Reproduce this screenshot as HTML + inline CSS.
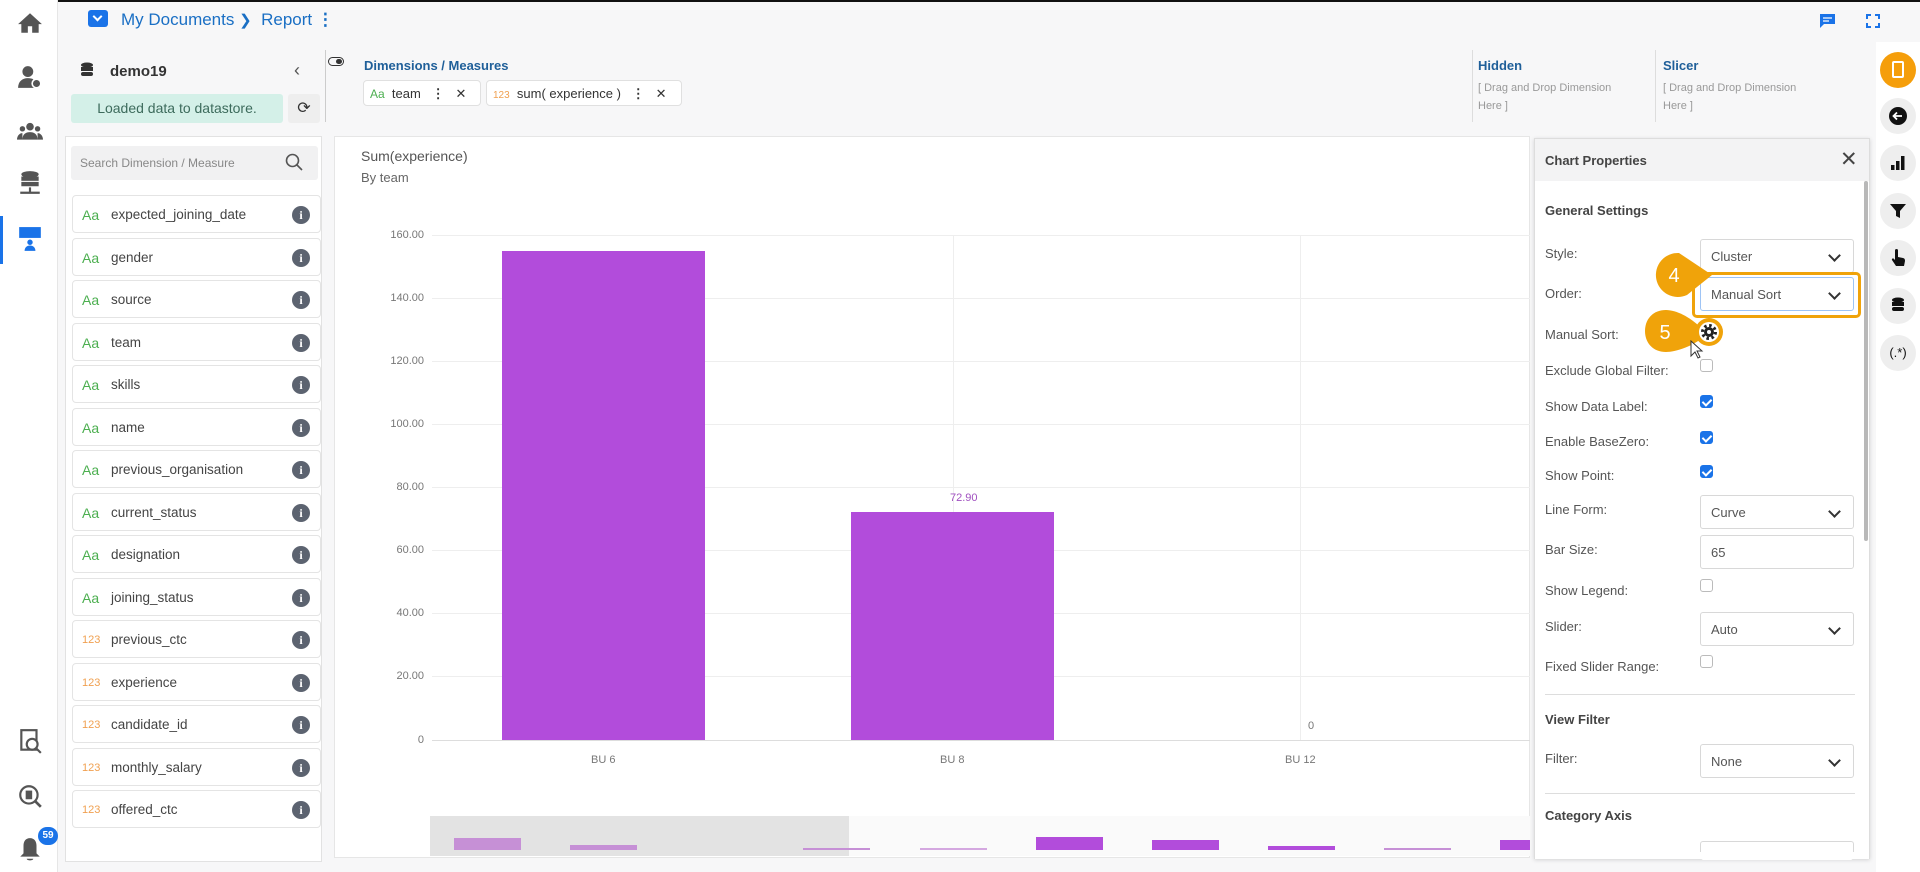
<!DOCTYPE html>
<html><head><meta charset="utf-8"><style>
*{box-sizing:border-box;margin:0;padding:0}
body{width:1920px;height:872px;overflow:hidden;background:#f7f7f8;font-family:"Liberation Sans",sans-serif;position:relative;color:#333}
.a{position:absolute}
.nav{left:0;top:0;width:58px;height:872px;background:#fff;border-right:1px solid #e6e6e6}
.ni{position:absolute;left:17px;width:26px;height:26px}
.item{position:absolute;left:72px;width:249px;height:38px;background:#fff;border:1px solid #e4e4e4;border-radius:4px;font-size:13.5px;color:#444}
.item .t{position:absolute;left:9px;top:11px;font-size:14px}
.item .n{position:absolute;left:38px;top:11px}
.item .i{position:absolute;right:10px;top:10px;width:18px;height:18px;border-radius:50%;background:#5c6370;color:#fff;font:bold 12px "Liberation Serif",serif;text-align:center;line-height:18px}
.aa{color:#4caf50}.nm{color:#f0a050;font-size:11px!important;top:13px!important}
.lbl{position:absolute;left:1545px;font-size:13px;color:#555}
.sel{position:absolute;left:1700px;width:154px;height:34px;background:#fff;border:1px solid #d8d8d8;border-radius:3px;font-size:13px;color:#555;padding:9px 10px}
.sel:after{content:"";position:absolute;right:14px;top:11px;width:7px;height:7px;border-right:2px solid #333;border-bottom:2px solid #333;transform:rotate(45deg)}
.cb{position:absolute;left:1700px;width:13px;height:13px;border:1px solid #bbb;border-radius:3px;background:#fff}
.cb.on{background:#1a73e8;border-color:#1a73e8}
.cb.on:after{content:"";position:absolute;left:3px;top:1px;width:4px;height:7px;border-right:2px solid #fff;border-bottom:2px solid #fff;transform:rotate(45deg)}
.h{position:absolute;left:1545px;font-size:13px;font-weight:bold;color:#444}
.yl{position:absolute;width:60px;text-align:right;left:364px;font-size:11px;color:#777}
.gl{position:absolute;left:432px;width:1098px;height:1px;background:#eee}
.ri{position:absolute;left:1880px;width:36px;height:36px;border-radius:50%;background:#eee;text-align:center;line-height:36px;font-size:14px;color:#111;font-weight:bold}
.ri svg{position:absolute;left:9px;top:9px}
</style></head><body>
<div class="a" style="left:0;top:0;width:1920px;height:2px;background:#111"></div>
<div class="a nav"></div>
<svg class="ni" style="top:10px" viewBox="0 0 24 24"><path d="M12 3L1 13h3v8h6v-6h4v6h6v-8h3z" fill="#555"/></svg>
<svg class="ni" style="top:64px" viewBox="0 0 24 24"><circle cx="10" cy="7" r="5" fill="#555"/><path d="M1 22c0-6 4-9 9-9s6 2 6 2v7z" fill="#555"/><circle cx="18" cy="18" r="4" fill="#555" stroke="#fff" stroke-width="1.5"/></svg>
<svg class="ni" style="top:118px" viewBox="0 0 24 24"><circle cx="12" cy="8" r="3.5" fill="#555"/><circle cx="5" cy="10" r="2.5" fill="#555"/><circle cx="19" cy="10" r="2.5" fill="#555"/><path d="M5 20c0-5 3-7 7-7s7 2 7 7zM0 20c0-3 2-6 5-6v6zM24 20c0-3-2-6-5-6v6z" fill="#555"/></svg>
<svg class="ni" style="top:170px" viewBox="0 0 24 24"><ellipse cx="12" cy="4" rx="8" ry="3" fill="#555"/><rect x="4" y="6" width="16" height="4" fill="#555"/><rect x="4" y="11" width="16" height="4" fill="#555"/><path d="M12 16v4M3 21h18" stroke="#555" stroke-width="2"/></svg>
<div class="a" style="left:0;top:216px;width:3px;height:48px;background:#1a73e8"></div>
<svg class="ni" style="top:226px" viewBox="0 0 24 24"><rect x="2" y="1" width="20" height="10" fill="#1a73e8"/><circle cx="12" cy="15" r="2.5" fill="#1a73e8"/><path d="M7 23c0-3 2-5 5-5s5 2 5 5z" fill="#1a73e8"/></svg>
<svg class="ni" style="top:728px" viewBox="0 0 24 24"><rect x="4" y="2" width="14" height="18" fill="none" stroke="#555" stroke-width="2"/><circle cx="14" cy="15" r="5" fill="#fff" stroke="#555" stroke-width="2"/><path d="M18 19l4 4" stroke="#555" stroke-width="2"/></svg>
<svg class="ni" style="top:783px" viewBox="0 0 24 24"><circle cx="11" cy="11" r="8" fill="none" stroke="#555" stroke-width="2"/><rect x="8" y="7" width="6" height="8" fill="#555"/><path d="M17 17l5 5" stroke="#555" stroke-width="2.5"/></svg>
<svg class="ni" style="top:836px" viewBox="0 0 24 24"><path d="M12 2c-4 0-6 3-6 7v7l-3 3h18l-3-3V9c0-4-2-7-6-7zM9 21h6c0 2-6 2-6 0" fill="#555"/></svg>
<div class="a" style="left:38px;top:827px;width:20px;height:18px;border-radius:9px;background:#1a73e8;color:#fff;font-size:10px;text-align:center;line-height:18px;font-weight:bold">59</div>
<div class="a" style="left:59px;top:2px;width:1861px;height:40px;background:#f7f7f8"></div>
<div class="a" style="left:88px;top:10px;width:20px;height:17px;background:#1a73e8;border-radius:3px"></div>
<div class="a" style="left:94px;top:13px;width:7px;height:7px;border-right:2px solid #fff;border-bottom:2px solid #fff;transform:rotate(45deg)"></div>
<div class="a" style="left:121px;top:10px;font-size:17px;color:#1a6fc4">My Documents <span style="font-size:15px">&#10095;</span>&nbsp;&nbsp;Report <b>&#8942;</b></div>
<svg class="a" style="left:1819px;top:13px" width="17" height="16" viewBox="0 0 17 16"><path d="M1 1h15v10H5l-4 4z" fill="#1a73e8"/><path d="M4 5h9M4 8h6" stroke="#fff" stroke-width="1.2"/></svg>
<svg class="a" style="left:1866px;top:14px" width="14" height="14" viewBox="0 0 14 14" fill="none" stroke="#1a73e8" stroke-width="2"><path d="M1 5V1h4M9 1h4v4M13 9v4H9M5 13H1V9"/></svg>
<div class="a" style="left:65px;top:50px;width:257px;height:84px;background:#f7f7f8"></div>
<svg class="a" style="left:80px;top:62px" width="14" height="18" viewBox="0 0 14 18"><ellipse cx="7" cy="3" rx="6" ry="2.5" fill="#333"/><rect x="1" y="5" width="12" height="4" fill="#333"/><rect x="1" y="10" width="12" height="4" rx="2" fill="#333"/></svg>
<div class="a" style="left:110px;top:63px;font-size:15px;font-weight:bold;color:#333">demo19</div>
<div class="a" style="left:294px;top:60px;font-size:18px;color:#555">&#8249;</div>
<div class="a" style="left:71px;top:94px;width:212px;height:29px;background:#d4f0e8;border-radius:3px;font-size:14px;color:#3d6b5c;text-align:center;line-height:29px">Loaded data to datastore.</div>
<div class="a" style="left:288px;top:94px;width:32px;height:29px;background:#eee;border-radius:3px;text-align:center;line-height:29px;font-size:16px">&#10227;</div>
<div class="a" style="left:325px;top:50px;width:1px;height:72px;background:#ccc"></div>
<div class="a" style="left:65px;top:136px;width:257px;height:726px;background:#fff;border:1px solid #e2e2e2"></div>
<div class="a" style="left:71px;top:146px;width:247px;height:34px;background:#f1f1f2;border-radius:3px"></div>
<div class="a" style="left:80px;top:156px;font-size:12px;color:#888">Search Dimension / Measure</div>
<svg class="a" style="left:285px;top:153px" width="18" height="18" viewBox="0 0 18 18"><circle cx="7.5" cy="7.5" r="6" fill="none" stroke="#555" stroke-width="1.6"/><path d="M12 12l5 5" stroke="#555" stroke-width="1.6"/></svg>
<div class="item" style="top:195px"><span class="t aa">Aa</span><span class="n">expected_joining_date</span><span class="i">i</span></div>
<div class="item" style="top:238px"><span class="t aa">Aa</span><span class="n">gender</span><span class="i">i</span></div>
<div class="item" style="top:280px"><span class="t aa">Aa</span><span class="n">source</span><span class="i">i</span></div>
<div class="item" style="top:323px"><span class="t aa">Aa</span><span class="n">team</span><span class="i">i</span></div>
<div class="item" style="top:365px"><span class="t aa">Aa</span><span class="n">skills</span><span class="i">i</span></div>
<div class="item" style="top:408px"><span class="t aa">Aa</span><span class="n">name</span><span class="i">i</span></div>
<div class="item" style="top:450px"><span class="t aa">Aa</span><span class="n">previous_organisation</span><span class="i">i</span></div>
<div class="item" style="top:493px"><span class="t aa">Aa</span><span class="n">current_status</span><span class="i">i</span></div>
<div class="item" style="top:535px"><span class="t aa">Aa</span><span class="n">designation</span><span class="i">i</span></div>
<div class="item" style="top:578px"><span class="t aa">Aa</span><span class="n">joining_status</span><span class="i">i</span></div>
<div class="item" style="top:620px"><span class="t nm">123</span><span class="n">previous_ctc</span><span class="i">i</span></div>
<div class="item" style="top:663px"><span class="t nm">123</span><span class="n">experience</span><span class="i">i</span></div>
<div class="item" style="top:705px"><span class="t nm">123</span><span class="n">candidate_id</span><span class="i">i</span></div>
<div class="item" style="top:748px"><span class="t nm">123</span><span class="n">monthly_salary</span><span class="i">i</span></div>
<div class="item" style="top:790px"><span class="t nm">123</span><span class="n">offered_ctc</span><span class="i">i</span></div>
<div class="a" style="left:328px;top:57px;width:16px;height:9px;border:1.5px solid #333;border-radius:5px"></div>
<div class="a" style="left:336px;top:59px;width:6px;height:5px;background:#333;border-radius:3px"></div>
<div class="a" style="left:364px;top:58px;font-size:13px;font-weight:bold;color:#1f5f99">Dimensions / Measures</div>
<div class="a" style="left:363px;top:80px;width:118px;height:26px;background:#fff;border:1px solid #e0e0e0;border-radius:4px;font-size:13px;padding:5px 6px"><span style="color:#4caf50;font-size:12px">Aa</span>&nbsp; team &nbsp;&nbsp;<b>&#8942;</b>&nbsp;&nbsp; &#10005;</div>
<div class="a" style="left:486px;top:80px;width:196px;height:26px;background:#fff;border:1px solid #e0e0e0;border-radius:4px;font-size:13px;padding:5px 6px"><span style="color:#f0a050;font-size:10px">123</span>&nbsp; sum( experience ) &nbsp;&nbsp;<b>&#8942;</b>&nbsp;&nbsp; &#10005;</div>
<div class="a" style="left:1472px;top:50px;width:1px;height:72px;background:#ddd"></div>
<div class="a" style="left:1655px;top:50px;width:1px;height:72px;background:#ddd"></div>
<div class="a" style="left:1478px;top:58px;font-size:13px;font-weight:bold;color:#1f5f99">Hidden</div>
<div class="a" style="left:1478px;top:79px;font-size:11px;color:#999;line-height:18px;width:150px">[ Drag and Drop Dimension Here ]</div>
<div class="a" style="left:1663px;top:58px;font-size:13px;font-weight:bold;color:#1f5f99">Slicer</div>
<div class="a" style="left:1663px;top:79px;font-size:11px;color:#999;line-height:18px;width:150px">[ Drag and Drop Dimension Here ]</div>
<div class="a" style="left:334px;top:136px;width:1196px;height:722px;background:#fff;border:1px solid #e6e6e6"></div>
<div class="a" style="left:361px;top:148px;font-size:14px;color:#555">Sum(experience)</div>
<div class="a" style="left:361px;top:170px;font-size:13px;color:#666">By team</div>
<div class="gl" style="top:235px"></div><div class="gl" style="top:298px"></div><div class="gl" style="top:361px"></div><div class="gl" style="top:424px"></div><div class="gl" style="top:487px"></div><div class="gl" style="top:550px"></div><div class="gl" style="top:613px"></div><div class="gl" style="top:676px"></div><div class="gl" style="top:740px;background:#ddd"></div>
<div class="a" style="left:953px;top:235px;width:1px;height:505px;background:#eee"></div>
<div class="a" style="left:1300px;top:235px;width:1px;height:505px;background:#eee"></div>
<div class="yl" style="top:229px">160.00</div><div class="yl" style="top:292px">140.00</div><div class="yl" style="top:355px">120.00</div><div class="yl" style="top:418px">100.00</div><div class="yl" style="top:481px">80.00</div><div class="yl" style="top:544px">60.00</div><div class="yl" style="top:607px">40.00</div><div class="yl" style="top:670px">20.00</div><div class="yl" style="top:734px">0</div>
<div class="a" style="left:502px;top:251px;width:203px;height:489px;background:#b24cdb"></div>
<div class="a" style="left:851px;top:512px;width:203px;height:228px;background:#b24cdb"></div>
<div class="a" style="left:950px;top:492px;font-size:11px;color:#a050c0">72.90</div>
<div class="a" style="left:1308px;top:720px;font-size:11px;color:#777">0</div>
<div class="a" style="left:591px;top:754px;font-size:11px;color:#777">BU 6</div>
<div class="a" style="left:940px;top:754px;font-size:11px;color:#777">BU 8</div>
<div class="a" style="left:1285px;top:754px;font-size:11px;color:#777">BU 12</div>
<div class="a" style="left:430px;top:816px;width:1100px;height:40px;background:#fafafa"></div>
<div class="a" style="left:430px;top:816px;width:419px;height:40px;background:#e3e3e3"></div>
<div class="a" style="left:454px;top:838px;width:67px;height:12px;background:#c690d6"></div>
<div class="a" style="left:570px;top:845px;width:67px;height:5px;background:#c690d6"></div>
<div class="a" style="left:803px;top:848px;width:67px;height:2px;background:#c690d6"></div>
<div class="a" style="left:920px;top:848px;width:67px;height:2px;background:#d4a8e0"></div>
<div class="a" style="left:1036px;top:837px;width:67px;height:13px;background:#b24cdb"></div>
<div class="a" style="left:1152px;top:840px;width:67px;height:10px;background:#b24cdb"></div>
<div class="a" style="left:1268px;top:846px;width:67px;height:4px;background:#b24cdb"></div>
<div class="a" style="left:1384px;top:848px;width:67px;height:2px;background:#c690d6"></div>
<div class="a" style="left:1500px;top:840px;width:30px;height:10px;background:#b24cdb"></div>
<div class="a" style="left:1534px;top:138px;width:336px;height:721px;background:#fff;border:1px solid #ddd;box-shadow:0 1px 4px rgba(0,0,0,.15)"></div>
<div class="a" style="left:1535px;top:139px;width:334px;height:42px;background:#f3f3f4"></div>
<div class="a" style="left:1545px;top:153px;font-size:13px;font-weight:bold;color:#444">Chart Properties</div>
<div class="a" style="left:1840px;top:147px;font-size:21px;color:#444;font-weight:normal">&#10005;</div>
<div class="a" style="left:1864px;top:181px;width:4px;height:360px;background:#b8b8b8;border-radius:2px"></div>
<div class="h" style="top:203px">General Settings</div>
<div class="lbl" style="top:246px">Style:</div><div class="sel" style="top:239px">Cluster</div>
<div class="lbl" style="top:286px">Order:</div><div class="sel" style="top:277px;border-color:#9ec4f5">Manual Sort</div>
<div class="a" style="left:1692px;top:272px;width:169px;height:46px;border:3px solid #f0a30a;border-radius:5px"></div>
<div class="lbl" style="top:327px">Manual Sort:</div>
<div class="lbl" style="top:363px">Exclude Global Filter:</div><div class="cb" style="top:359px"></div>
<div class="lbl" style="top:399px">Show Data Label:</div><div class="cb on" style="top:395px"></div>
<div class="lbl" style="top:434px">Enable BaseZero:</div><div class="cb on" style="top:431px"></div>
<div class="lbl" style="top:468px">Show Point:</div><div class="cb on" style="top:465px"></div>
<div class="lbl" style="top:502px">Line Form:</div><div class="sel" style="top:495px">Curve</div>
<div class="lbl" style="top:542px">Bar Size:</div><div class="sel nochev" style="top:535px;">65</div>
<div class="lbl" style="top:583px">Show Legend:</div><div class="cb" style="top:579px"></div>
<div class="lbl" style="top:619px">Slider:</div><div class="sel" style="top:612px">Auto</div>
<div class="lbl" style="top:659px">Fixed Slider Range:</div><div class="cb" style="top:655px"></div>
<div class="a" style="left:1545px;top:694px;width:310px;height:1px;background:#ddd"></div>
<div class="h" style="top:712px">View Filter</div>
<div class="lbl" style="top:751px">Filter:</div><div class="sel" style="top:744px">None</div>
<div class="a" style="left:1545px;top:793px;width:310px;height:1px;background:#ddd"></div>
<div class="h" style="top:808px">Category Axis</div>
<div class="sel nochev" style="top:841px;height:18px;border-bottom:none"></div>
<style>.nochev:after{display:none}</style>
<div class="a" style="left:1535px;top:852px;width:334px;height:7px;background:#fff"></div>
<svg class="a" style="left:1650px;top:250px" width="80" height="60" viewBox="0 0 80 60">
<path d="M29 3a22 22 0 1 0 8 42l25-20z" fill="#f0a30a"/>
<text x="24" y="32" font-family="Liberation Sans" font-size="20" fill="#fff" text-anchor="middle">4</text>
</svg>
<svg class="a" style="left:1640px;top:305px" width="100" height="50" viewBox="0 0 100 50">
<path d="M26 5c-13 0-21 9-21 21s8 21 21 21c10 0 28-6 40-17l-6-8c-10-10-24-17-34-17z" fill="#f0a30a"/>
<circle cx="69" cy="27" r="14" fill="#f0a30a"/>
<circle cx="69" cy="27" r="10" fill="#fff"/>
<text x="25" y="34" font-family="Liberation Sans" font-size="20" fill="#fff" text-anchor="middle">5</text>
<circle cx="69" cy="27" r="6.5" fill="none" stroke="#222" stroke-width="3" stroke-dasharray="2.5 2.6"/>
<circle cx="69" cy="27" r="5" fill="#222"/><circle cx="69" cy="27" r="2" fill="#fff"/>
</svg>
<svg class="a" style="left:1690px;top:340px" width="14" height="20" viewBox="0 0 14 20"><path d="M1 1v15l4-4 3 6 2-1-3-6h5z" fill="#fff" stroke="#333" stroke-width="1"/></svg>
<div class="a" style="left:1876px;top:42px;width:44px;height:830px;background:#fff"></div>
<div class="ri" style="top:52px;background:#f59e0b"><div style="position:absolute;left:12px;top:9px;width:12px;height:17px;border:2px solid #fff;border-radius:2px"></div></div>
<div class="ri" style="top:98px"><svg width="18" height="18" viewBox="0 0 18 18"><circle cx="9" cy="9" r="9" fill="#111"/><path d="M13 9H5M8 5.5L4.5 9 8 12.5" stroke="#fff" stroke-width="1.8" fill="none"/></svg></div>
<div class="ri" style="top:145px"><svg width="18" height="18" viewBox="0 0 18 18"><rect x="2" y="11" width="3.5" height="5" fill="#111"/><rect x="7" y="7" width="3.5" height="9" fill="#111"/><rect x="12" y="2" width="3.5" height="14" fill="#111"/></svg></div>
<div class="ri" style="top:193px"><svg width="18" height="18" viewBox="0 0 18 18"><path d="M1 2h16l-6 7v7l-4-2V9z" fill="#111"/></svg></div>
<div class="ri" style="top:240px"><svg width="18" height="18" viewBox="0 0 18 18"><path d="M6 1.5a1.5 1.5 0 0 1 3 0V8l5 1c2 .5 2 2 2 3l-1 5H7L3 11c-.5-1 .5-2 1.5-1.5L6 11z" fill="#111"/></svg></div>
<div class="ri" style="top:288px"><svg width="18" height="18" viewBox="0 0 14 18"><ellipse cx="7" cy="3" rx="6" ry="2.5" fill="#111"/><rect x="1" y="5" width="12" height="4" fill="#111"/><rect x="1" y="10" width="12" height="4" rx="2" fill="#111"/></svg></div>
<div class="ri" style="top:335px;font-weight:normal;font-size:13px">(.*)</div>
</body></html>
